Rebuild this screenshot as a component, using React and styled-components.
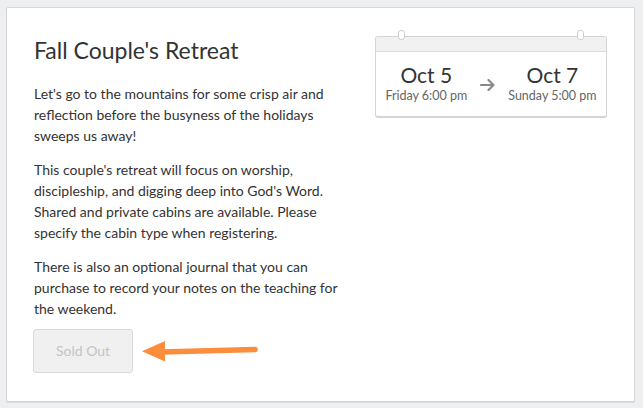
import React from "react";
import styled, { createGlobalStyle } from "styled-components";

const Global = createGlobalStyle`
  html, body { margin: 0; padding: 0; background: #eeeff1; }
  body { font-family: Lato, "Noto Sans", sans-serif; color: #333; }
`;

const Card = styled.div`
  margin: 7px 8px 8px 6px;
  background: #fff;
  border: 1px solid #d6d6d8;
  border-radius: 2px;
  box-shadow: 0 1px 0 #dcdcde;
  padding: 27px 27px 28px 27px;
  display: flex;
  justify-content: space-between;
  align-items: flex-start;
`;

const Main = styled.div`
  width: 312px;
`;

const Title = styled.h1`
  margin: 2px 0 18px;
  font-size: 23px;
  font-weight: 400;
  line-height: 1.2;
  color: #333;
`;

const Paragraph = styled.p`
  margin: 0 0 13px;
  font-size: 14px;
  line-height: 21px;
  color: #333;
  &:last-of-type { margin-bottom: 10px; }
`;

const Actions = styled.div`
  display: flex;
  align-items: center;
  gap: 9px;
  margin-left: -1px;
`;

const SoldOut = styled.button`
  width: 100px;
  height: 44px;
  background: #f0f0f0;
  border: 1px solid #d9d9d9;
  border-radius: 3px;
  color: #c4c4c4;
  font-family: Lato, sans-serif;
  font-size: 14px;
  cursor: not-allowed;
`;

const Calendar = styled.div`
  position: relative;
  margin-top: 1px;
  width: 230px;
  border: 1px solid #d4d4d6;
  border-bottom-width: 2px;
  border-radius: 3px;
  background: #fff;
`;

const CalHeader = styled.div`
  height: 14px;
  background: #f1f1f1;
  border-bottom: 1px solid #dcdcdc;
  border-radius: 2px 2px 0 0;
`;

const Ring = styled.span`
  position: absolute;
  top: -7px;
  ${p => (p.$side === "left" ? "left: 22px;" : "right: 22px;")}
  width: 5px;
  height: 8px;
  border: 1px solid #cfcfcf;
  border-radius: 3px;
  background: #fff;
`;

const CalBody = styled.div`
  display: flex;
  justify-content: center;
  align-items: center;
  gap: 13px;
  padding: 10px 0 12px;
`;

const DateBlock = styled.div`
  display: flex;
  flex-direction: column;
  align-items: center;
`;

const DateMain = styled.div`
  font-size: 21px;
  line-height: 26px;
  color: #333;
`;

const DateSub = styled.div`
  font-size: 12.5px;
  line-height: 16px;
  color: #666;
`;

const ArrowIcon = () => (
  <svg width="15" height="12" viewBox="0 0 15 12" style={{ marginTop: 3 }}>
    <path d="M1 6 H13.5 M8.5 1 L13.5 6 L8.5 11" fill="none" stroke="#8a8a8a" strokeWidth="2.2" strokeLinecap="round" strokeLinejoin="round" />
  </svg>
);

const Pointer = () => (
  <svg width="116" height="22" viewBox="0 0 116 22">
    <line x1="20" y1="12" x2="113" y2="9.5" stroke="#fb8d3c" strokeWidth="5.5" strokeLinecap="round" />
    <polygon points="0,11.3 23,1 23,21.5" fill="#fb8d3c" />
  </svg>
);

export default function App() {
  return (
    <>
      <Global />
      <Card>
        <Main>
          <Title>Fall Couple's Retreat</Title>
          <Paragraph>
            Let's go to the mountains for some crisp air and reflection before the busyness of the holidays sweeps us away!
          </Paragraph>
          <Paragraph>
            This couple's retreat will focus on worship, discipleship, and digging deep into God's Word. Shared and private cabins are available. Please specify the cabin type when registering.
          </Paragraph>
          <Paragraph>
            There is also an optional journal that you can purchase to record your notes on the teaching for the weekend.
          </Paragraph>
          <Actions>
            <SoldOut disabled>Sold Out</SoldOut>
            <Pointer />
          </Actions>
        </Main>
        <Calendar>
          <Ring $side="left" />
          <Ring $side="right" />
          <CalHeader />
          <CalBody>
            <DateBlock>
              <DateMain>Oct 5</DateMain>
              <DateSub>Friday 6:00 pm</DateSub>
            </DateBlock>
            <ArrowIcon />
            <DateBlock>
              <DateMain>Oct 7</DateMain>
              <DateSub>Sunday 5:00 pm</DateSub>
            </DateBlock>
          </CalBody>
        </Calendar>
      </Card>
    </>
  );
}
